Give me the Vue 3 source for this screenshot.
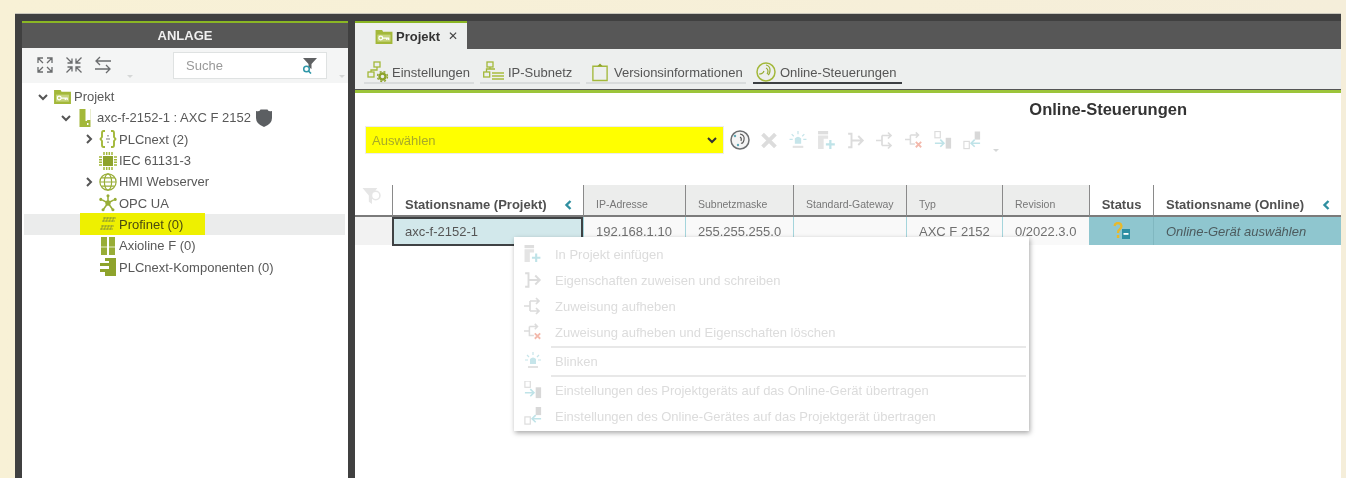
<script setup>
const tree = [
  { label: 'Projekt', icon: 'folder', lvl: 0, chev: 'down' },
  { label: 'axc-f-2152-1 : AXC F 2152', icon: 'device', lvl: 1, chev: 'down', shield: true },
  { label: 'PLCnext (2)', icon: 'braces', lvl: 2, chev: 'right' },
  { label: 'IEC 61131-3', icon: 'chip', lvl: 2 },
  { label: 'HMI Webserver', icon: 'globe', lvl: 2, chev: 'right' },
  { label: 'OPC UA', icon: 'star', lvl: 2 },
  { label: 'Profinet (0)', icon: 'profinet', lvl: 2, selected: true },
  { label: 'Axioline F (0)', icon: 'axio', lvl: 2 },
  { label: 'PLCnext-Komponenten (0)', icon: 'comp', lvl: 2 }
]
const subTabs = [
  { label: 'Einstellungen', icon: 'settings' },
  { label: 'IP-Subnetz', icon: 'subnet' },
  { label: 'Versionsinformationen', icon: 'clip' },
  { label: 'Online-Steuerungen', icon: 'hand', active: true }
]
const tools = ['x', 'beacon', 'docplus', 'assign', 'unassign', 'unassignx', 'toonline', 'toproject']
const heads = [
  { label: '', cls: 'h-filter' },
  { label: 'Stationsname (Projekt)', cls: 'h-main', arrow: true },
  { label: 'IP-Adresse', cls: 'h-sub' },
  { label: 'Subnetzmaske', cls: 'h-sub' },
  { label: 'Standard-Gateway', cls: 'h-sub' },
  { label: 'Typ', cls: 'h-sub' },
  { label: 'Revision', cls: 'h-sub' },
  { label: 'Status', cls: 'h-main h-status' },
  { label: 'Stationsname (Online)', cls: 'h-main', arrow: true }
]
const menu = [
  { label: 'In Projekt einfügen', icon: 'docplus' },
  { label: 'Eigenschaften zuweisen und schreiben', icon: 'assign' },
  { label: 'Zuweisung aufheben', icon: 'unassign' },
  { label: 'Zuweisung aufheben und Eigenschaften löschen', icon: 'unassignx', sep: true },
  { label: 'Blinken', icon: 'beacon', sep: true },
  { label: 'Einstellungen des Projektgeräts auf das Online-Gerät übertragen', icon: 'toonline' },
  { label: 'Einstellungen des Online-Gerätes auf das Projektgerät übertragen', icon: 'toproject' }
]
</script>

<template>
  <div class="page">
    <svg class="defs" aria-hidden="true">
      <symbol id="folder" viewBox="0 0 18 16">
        <path d="M0 1h7l1 2h10v13H0z" fill="#a3b83a" />
        <rect x="2" y="6" width="14" height="7.500" fill="#c6d47c" />
        <circle cx="5.500" cy="9.700" r="2" fill="none" stroke="#fff" stroke-width="1.300" />
        <path d="M7.500 9.700h7M12 9.700v2M14 9.700v2" stroke="#fff" stroke-width="1.300" fill="none" />
      </symbol>
      <symbol id="device" viewBox="0 0 12 18">
        <rect x="0.500" y="0" width="11" height="18" fill="#a3b83a" />
        <rect x="6.500" y="0" width="1.600" height="12" fill="#fff" />
        <rect x="8" y="0" width="3.500" height="11" fill="#fff" />
        <rect x="8" y="14" width="1.500" height="2" fill="#fff" />
      </symbol>
      <symbol id="braces" viewBox="0 0 18 18">
        <path d="M6 1H4.500Q3 1 3 3v4L1.500 9 3 11v4q0 2 1.500 2H6M12 1h1.500Q15 1 15 3v4l1.500 2-1.500 2v4q0 2-1.500 2H12" fill="none" stroke="#a3b83a" stroke-width="1.900" />
        <path d="M9 5v1.500M7 9h4M9 11.500V13" stroke="#777" stroke-width="1.200" fill="none" />
      </symbol>
      <symbol id="chip" viewBox="0 0 18 18">
        <rect x="4" y="4" width="10" height="10" fill="#8ea32c" />
        <path d="M5 0v3M7.700 0v3M10.300 0v3M13 0v3M5 15v3M7.700 15v3M10.300 15v3M13 15v3M0 5h3M0 7.700h3M0 10.300h3M0 13h3M15 5h3M15 7.700h3M15 10.300h3M15 13h3" stroke="#a3b83a" stroke-width="1.500" />
      </symbol>
      <symbol id="globe" viewBox="0 0 20 20">
        <g fill="none" stroke="#98ad36" stroke-width="1.300">
          <circle cx="10" cy="10" r="9" />
          <ellipse cx="10" cy="10" rx="4" ry="9" />
          <path d="M1 10h18M2.500 5.500h15M2.500 14.500h15" />
        </g>
      </symbol>
      <symbol id="star" viewBox="0 0 20 20">
        <path d="M10 10V3M10 10 3.500 6.500M10 10l6.500-3.500M10 10l-5 7M10 10l5 7" stroke="#98ad36" stroke-width="1.700" />
        <circle cx="10" cy="10" r="3" fill="#98ad36" />
        <g fill="#98ad36"><circle cx="10" cy="2" r="1.700" /><circle cx="2" cy="6" r="1.700" /><circle cx="18" cy="6" r="1.700" /><circle cx="4.500" cy="17.500" r="1.700" /><circle cx="15.500" cy="17.500" r="1.700" /></g>
      </symbol>
      <symbol id="profinet" viewBox="0 0 18 14">
        <path d="M4 1h13M3 4h13M2 9h13M1 12h13" stroke="#9aa52a" stroke-width="1.200" />
        <path d="M6 0 4 5M9 0 7 5M12 0l-2 5M15 0l-2 5M4 8l-2 5M7 8l-2 5M10 8l-2 5M13 8l-2 5" stroke="#9aa52a" stroke-width="1" />
      </symbol>
      <symbol id="axio" viewBox="0 0 14 18">
        <rect x="0" y="0" width="6" height="18" fill="#98ad36" />
        <rect x="8" y="0" width="6" height="18" fill="#98ad36" />
        <path d="M0 10h6M8 10h6" stroke="#e8eec8" stroke-width="1" />
      </symbol>
      <symbol id="comp" viewBox="0 0 16 18">
        <path d="M5 0h11v18H5v-4H0v-3h9V8H0V5h9V3H5z" fill="#8ea32c" />
      </symbol>
      <symbol id="shield" viewBox="0 0 16 18">
        <path d="M0 2q4 1 4.500-1.500h7Q12 3 16 2v7q0 6-8 9-8-3-8-9z" fill="#5c5f62" />
      </symbol>
      <symbol id="expand" viewBox="0 0 18 18">
        <g fill="none" stroke="#6a6c6e" stroke-width="1.300"><path d="M7 2H2v5M2 2l5 5M11 2h5v5M16 2l-5 5M7 16H2v-5M2 16l5-5M11 16h5v-5M16 16l-5-5" /></g>
      </symbol>
      <symbol id="collapse" viewBox="0 0 18 18">
        <g fill="none" stroke="#6a6c6e" stroke-width="1.300"><path d="M2.500 7H7V2.500M7 7 1.500 1.500M15.500 7H11V2.500M11 7l5.500-5.500M2.500 11H7v4.500M7 11l-5.500 5.500M15.500 11H11v4.500M11 11l5.500 5.500" /></g>
      </symbol>
      <symbol id="swap" viewBox="0 0 18 18">
        <path d="M17 5H3M6 1 2 5l4 4M1 13h14M12 9l4 4-4 4" fill="none" stroke="#6a6c6e" stroke-width="1.300" />
      </symbol>
      <symbol id="search" viewBox="0 0 16 16">
        <path d="M1 0h14L9.500 6v5l-3-2V6z" fill="#5f6163" />
        <circle cx="4.500" cy="11" r="2.800" fill="#fff" stroke="#2f97a8" stroke-width="1.500" />
        <path d="m6.500 13 2.500 2.500" stroke="#2f97a8" stroke-width="1.600" />
      </symbol>
      <symbol id="settings" viewBox="0 0 22 22">
        <g fill="none" stroke="#a3b83a" stroke-width="1.300"><rect x="7" y="1" width="6" height="5" /><rect x="1" y="11" width="6" height="5" /><path d="M10 6v3H4v2" /></g>
        <circle cx="15.500" cy="15.500" r="3" fill="none" stroke="#8ea32c" stroke-width="2.400" />
        <circle cx="15.500" cy="15.500" r="5" fill="none" stroke="#8ea32c" stroke-width="1.400" stroke-dasharray="2 2" />
      </symbol>
      <symbol id="subnet" viewBox="0 0 22 22">
        <g fill="none" stroke="#a3b83a" stroke-width="1.300"><rect x="4" y="1" width="6" height="5" /><rect x="0.700" y="11" width="6" height="5" /><path d="M7 6v2H3.500v3M7 8h5" /></g>
        <path d="M9 12h12M9 15h12M9 18h12" stroke="#b9c96a" stroke-width="1.800" />
      </symbol>
      <symbol id="clip" viewBox="0 0 18 20">
        <path d="M1 3h16v16H1z" fill="none" stroke="#a3b83a" stroke-width="1.500" />
        <path d="M6 3l3-3 3 3z" fill="#8ea32c" />
      </symbol>
      <symbol id="hand" viewBox="0 0 20 20">
        <circle cx="10" cy="10" r="9" fill="none" stroke="#a3b83a" stroke-width="1.500" />
        <path d="M3 12q4 0 5-3M10 3q4 1 4 5 0 4-2 5M10 6q2 1 2 3 0 2-1 3" fill="none" stroke="#98ad36" stroke-width="1.200" />
      </symbol>
      <symbol id="disc" viewBox="0 0 20 20">
        <circle cx="10" cy="10" r="9" fill="#f4f4f4" stroke="#6d6f71" stroke-width="1.500" />
        <circle cx="5" cy="6" r="1.200" fill="#5fa8b8" /><circle cx="8" cy="15" r="1.200" fill="#5fa8b8" />
        <path d="M10 4q5 1 4 6-1 4-3 3M10 7q2 1 1 4" fill="none" stroke="#555" stroke-width="1.100" />
      </symbol>
      <symbol id="x" viewBox="0 0 14 14">
        <path d="m2 2 10 10M12 2 2 12" stroke="#dcdcdc" stroke-width="3" />
      </symbol>
      <symbol id="beacon" viewBox="0 0 16 18">
        <path d="M5 12V7q3-3 6 0v5z" fill="#c6e5ea" />
        <path d="M8 0v3M2 3l2 2M14 3l-2 2M0 8h3M13 8h3" stroke="#c6e5ea" stroke-width="1.200" />
        <rect x="3" y="14" width="10" height="2" fill="#e2e2e2" />
      </symbol>
      <symbol id="docplus" viewBox="0 0 16 17">
        <rect x="0" y="0" width="9" height="3" fill="#dedede" />
        <path d="M0 4h9v3H5v9H0z" fill="#e4e4e4" />
        <path d="M11 8v8M7 12h8" stroke="#bfe3e8" stroke-width="2" />
      </symbol>
      <symbol id="assign" viewBox="0 0 16 14">
        <path d="M1 1h3v12H1M4 7h10M10 3l4 4-4 4" fill="none" stroke="#dcdcdc" stroke-width="1.700" />
      </symbol>
      <symbol id="unassign" viewBox="0 0 18 16">
        <path d="M0 8h6M6 3v10M6 3h9M6 13h9M12 0l3 3-3 3M12 10l3 3-3 3" fill="none" stroke="#dcdcdc" stroke-width="1.700" />
      </symbol>
      <symbol id="unassignx" viewBox="0 0 20 18">
        <path d="M0 8h6M6 3v10h5M6 3h9M12 0l3 3-3 3" fill="none" stroke="#dcdcdc" stroke-width="1.700" />
        <path d="m12 10.500 6 6M18 10.500l-6 6" stroke="#f3b9ac" stroke-width="2" />
      </symbol>
      <symbol id="toonline" viewBox="0 0 20 20">
        <rect x="1" y="0" width="6" height="7" fill="#fff" stroke="#dcdcdc" stroke-width="1.300" />
        <path d="M1 13h10M7 9l4 4-4 4" fill="none" stroke="#bfe3e8" stroke-width="1.800" />
        <rect x="13" y="7" width="6" height="12" fill="#d8d8d8" />
      </symbol>
      <symbol id="toproject" viewBox="0 0 20 20">
        <rect x="1" y="11" width="6" height="8" fill="#fff" stroke="#dcdcdc" stroke-width="1.300" />
        <path d="M19 13H9M13 9l-4 4 4 4" fill="none" stroke="#bfe3e8" stroke-width="1.800" />
        <rect x="13" y="0" width="6" height="9" fill="#d8d8d8" />
      </symbol>
      <symbol id="filter" viewBox="0 0 20 18">
        <path d="M1 1h14l-5 7v8l-3-2V8z" fill="#e6e6e6" />
        <circle cx="13.500" cy="8" r="4" fill="#fff" stroke="#e6e6e6" stroke-width="1.500" />
      </symbol>
      <symbol id="status" viewBox="0 0 17 18">
        <path d="M1.500 4Q2 1 5 1t3.500 3Q8.500 6 6.500 7.500 5 8.500 5 11" fill="none" stroke="#e8b92b" stroke-width="2.300" />
        <rect x="3.800" y="13" width="2.500" height="3" fill="#e8b92b" />
        <rect x="9" y="7" width="8" height="10" fill="#2e8ea3" />
        <rect x="10.500" y="11" width="5" height="1.800" fill="#fff" />
      </symbol>
      <symbol id="back" viewBox="0 0 8 10">
        <path d="M6.500 1 2.500 5l4 4" fill="none" stroke="#2f8fa0" stroke-width="2.400" />
      </symbol>
    </svg>

    <div class="window">
      <aside class="left">
        <div class="panel-title">ANLAGE</div>
        <div class="left-tools">
          <svg class="lt-icon"><use href="#expand" /></svg>
          <svg class="lt-icon"><use href="#collapse" /></svg>
          <svg class="lt-icon"><use href="#swap" /></svg>
          <span class="caret caret-a"></span>
          <div class="searchbox">
            <span>Suche</span>
            <svg class="search-icon"><use href="#search" /></svg>
          </div>
          <span class="caret"></span>
        </div>
        <ul class="tree">
          <li v-for="n in tree" :key="n.label" class="node" :class="['lvl' + n.lvl, { selected: n.selected }]">
            <span class="chev-slot">
              <svg v-if="n.chev" class="chev" :class="n.chev" viewBox="0 0 10 10"><path d="M1 3l4 4 4-4" fill="none" stroke="#555" stroke-width="2" /></svg>
            </span>
            <span class="label-wrap">
              <svg class="node-icon" :class="'ni-' + n.icon"><use :href="'#' + n.icon" /></svg>
              <span class="node-label">{{ n.label }}</span>
            </span>
            <svg v-if="n.shield" class="shield"><use href="#shield" /></svg>
          </li>
        </ul>
      </aside>

      <main class="right">
        <div class="tabstrip">
          <div class="tab">
            <svg class="tab-icon"><use href="#folder" /></svg>
            <span>Projekt</span>
            <span class="tab-x">✕</span>
          </div>
        </div>
        <nav class="subtabs">
          <div v-for="t in subTabs" :key="t.label" class="subtab" :class="{ active: t.active }">
            <svg class="st-icon"><use :href="'#' + t.icon" /></svg>
            <span>{{ t.label }}</span>
          </div>
        </nav>
        <div class="content">
          <h2 class="title">Online-Steuerungen</h2>
          <div class="toolbar">
            <div class="select">
              <span>Auswählen</span>
              <svg class="sel-chev" viewBox="0 0 10 10"><path d="M1 3l4 4 4-4" fill="none" stroke="#333" stroke-width="2" /></svg>
            </div>
            <svg class="tool-disc"><use href="#disc" /></svg>
            <div class="tools">
              <span v-for="t in tools" :key="t" class="tool-slot"><svg class="tool"><use :href="'#' + t" /></svg></span>
            </div>
            <span class="caret caret-tools"></span>
          </div>

          <div class="grid">
            <div v-for="h in heads" :key="h.cls + h.label" class="hd" :class="h.cls">
              <svg v-if="h.cls === 'h-filter'" class="filter-icon"><use href="#filter" /></svg>
              <span>{{ h.label }}</span>
              <svg v-if="h.arrow" class="back"><use href="#back" /></svg>
            </div>
            <div class="cd c-blank"></div>
            <div class="cd c-name">axc-f-2152-1</div>
            <div class="cd c-val">192.168.1.10</div>
            <div class="cd c-val">255.255.255.0</div>
            <div class="cd c-val"></div>
            <div class="cd c-val">AXC F 2152</div>
            <div class="cd c-val">0/2022.3.0</div>
            <div class="cd c-status"><svg class="status-icon"><use href="#status" /></svg></div>
            <div class="cd c-online">Online-Gerät auswählen</div>
          </div>

          <ul class="menu">
            <template v-for="m in menu" :key="m.label">
              <li class="menu-item">
                <svg class="menu-icon"><use :href="'#' + m.icon" /></svg>
                <span>{{ m.label }}</span>
              </li>
              <li v-if="m.sep" class="menu-sep"></li>
            </template>
          </ul>
        </div>
      </main>
    </div>
  </div>
</template>

<style>
html, body { margin: 0; background: #f6efd9; overflow: hidden; }
</style>

<style scoped>
.page {
  width: 1346px;
  height: 478px;
  box-sizing: border-box;
  padding: 14px 5px 0 15px;
  overflow: hidden;
  font-family: "Liberation Sans", Arial, sans-serif;
  font-size: 13px;
  color: #555;
  filter: blur(0.55px);
  background: linear-gradient(90deg, #f8f1d6 0, #f5eeda 100%);
}
.defs { position: absolute; width: 0; height: 0; overflow: hidden; }
ul { list-style: none; margin: 0; padding: 0; }
.window {
  height: 464px;
  display: flex;
  gap: 7px;
  padding: 7px 0 0 7px;
  box-sizing: border-box;
  background: #404040;
  box-shadow: 0 -1px 0 #c9c7bc;
}
.left {
  width: 326px;
  flex: none;
  background: #fff;
  display: flex;
  flex-direction: column;
}
.panel-title {
  height: 25px;
  border-top: 2px solid #8ab624;
  background: #575757;
  color: #f0f0f0;
  font-weight: bold;
  font-size: 13px;
  line-height: 25px;
  text-align: center;
}
.left-tools {
  height: 35px;
  background: #f4f5f5;
  display: flex;
  align-items: center;
  padding-left: 14px;
}
.lt-icon { width: 18px; height: 18px; margin-right: 11px; margin-top: -1px; }
.caret {
  display: block;
  width: 0;
  height: 0;
  border-left: 3px solid transparent;
  border-right: 3px solid transparent;
  border-top: 3px solid #d5d7d7;
}
.caret-a { margin: 22px 0 0 4px; }
.searchbox {
  width: 154px;
  height: 27px;
  margin-left: 40px;
  margin-right: 12px;
  box-sizing: border-box;
  border: 1px solid #dfe2e2;
  background: #fff;
  display: flex;
  align-items: center;
  justify-content: space-between;
  padding: 0 8px 0 12px;
  color: #999;
}
.searchbox + .caret { margin-top: 22px; }
.search-icon { width: 16px; height: 16px; }
.tree { padding-top: 3px; }
.node {
  height: 21.3px;
  margin: 0 3px 0 2px;
  display: flex;
  align-items: center;
  color: #585858;
}
.node.selected { background: #ebecec; }
.chev-slot { width: 10px; height: 10px; flex: none; display: block; }
.chev { width: 10px; height: 10px; display: block; }
.chev.right { transform: rotate(-90deg); }
.lvl0 { padding-left: 14px; }
.lvl1 { padding-left: 37px; }
.lvl2 { padding-left: 60px; }
.label-wrap { display: flex; align-items: center; }
.lvl0 .label-wrap { margin-left: 6px; }
.lvl1 .label-wrap { margin-left: 8px; }
.lvl2 .label-wrap { margin-left: 5px; }
.selected .label-wrap {
  background: #eef000;
  height: 22px;
  margin-left: -14px;
  padding: 0 22px 0 19px;
  color: #4a4a10;
}
.node-icon { width: 18px; height: 18px; margin-right: 2px; flex: none; }
.ni-folder { width: 17px; height: 15px; margin-right: 3px; }
.ni-device { width: 12px; height: 18px; margin-right: 6px; }
.ni-profinet { width: 18px; height: 14px; }
.ni-axio { width: 14px; height: 18px; margin: 0 4px 0 2px; }
.ni-comp { width: 16px; height: 18px; margin: 0 3px 0 1px; }
.shield { width: 16px; height: 18px; margin-left: 5px; }

.right {
  flex: 1;
  min-width: 0;
  background: #fff;
  display: flex;
  flex-direction: column;
}
.tabstrip { height: 28px; background: #575757; flex: none; display: flex; }
.tab {
  width: 112px;
  box-sizing: border-box;
  border-top: 2px solid #8ab624;
  background: #edefee;
  display: flex;
  align-items: center;
  padding-left: 20px;
  color: #333;
  font-weight: bold;
}
.tab-icon { width: 18px; height: 15px; margin-right: 3px; }
.tab-x { margin-left: 8px; font-size: 12px; color: #444; font-weight: normal; }
.subtabs {
  height: 41px;
  flex: none;
  box-sizing: border-box;
  background: #edefee;
  display: flex;
  padding: 9px 0 0 9px;
  gap: 6px;
  border-bottom: 1px solid #555;
}
.subtab {
  height: 26px;
  box-sizing: border-box;
  display: flex;
  align-items: center;
  border-bottom: 2px solid #d9dcdc;
  padding: 4px 3px 0 3px;
  color: #555;
  white-space: nowrap;
}
.subtab.active { border-bottom-color: #3c3f42; margin-left: 1px; }
.subtab:nth-child(1) { width: 110px; }
.subtab:nth-child(2) { width: 100px; }
.subtab:nth-child(3) { width: 160px; }
.subtab:nth-child(4) { width: 149px; }
.st-icon { width: 22px; height: 22px; margin-right: 3px; flex: none; }
.subtab:nth-child(3) .st-icon { width: 16px; height: 19px; margin: 0 6px 0 3px; }
.subtab:nth-child(4) .st-icon { width: 20px; height: 20px; margin-right: 4px; }
.content {
  flex: 1;
  border-top: 3px solid #9cc43a;
  position: relative;
}
.title {
  margin: 0;
  padding: 7px 154px 0 0;
  text-align: right;
  font-size: 16.5px;
  line-height: 18px;
  font-weight: bold;
  color: #333;
}
.toolbar {
  display: flex;
  align-items: center;
  margin: 9px 0 0 11px;
  height: 26px;
}
.select {
  width: 357px;
  height: 26px;
  flex: none;
  box-sizing: border-box;
  background: #ffff00;
  display: flex;
  align-items: center;
  justify-content: space-between;
  padding: 0 6px 0 6px;
  color: #a8aa28;
  box-shadow: 0 0 0 1px #ececec;
}
.sel-chev { width: 10px; height: 10px; }
.tool-disc { width: 20px; height: 20px; margin-left: 7px; flex: none; }
.tools { display: flex; margin-left: 4px; align-items: center; }
.tool-slot { width: 29px; display: flex; justify-content: center; }
.tool { width: 18px; height: 19px; }
.caret-tools { margin: 20px 0 0 7px; }

.grid {
  display: grid;
  grid-template-columns: 37px 191px 102px 108px 113px 96px 87px 64px 188px;
  grid-template-rows: 32px 29px;
  margin: 32px 0 0 0;
}
.hd {
  display: flex;
  align-items: center;
  box-sizing: border-box;
  border-left: 1px solid #8a8a8a;
  border-bottom: 2px solid #7b7b7b;
  padding: 8px 0 0 12px;
  white-space: nowrap;
}
.h-filter { border-left: none; padding: 0 0 8px 6px; }
.filter-icon { width: 22px; height: 19px; }
.h-main { font-weight: bold; color: #505050; background: #fff; justify-content: space-between; padding-right: 11px; }
.h-status { justify-content: center; padding: 8px 0 0; }
.h-sub { background: #ecedec; font-size: 10.500px; color: #777; }
.back { width: 8px; height: 10px; margin-top: 1px; }
.cd {
  display: flex;
  align-items: center;
  box-sizing: border-box;
  padding: 0 12px;
  white-space: nowrap;
  background: #f9f9f9;
  border-left: 1px solid #a5d5dc;
  margin-bottom: 1px;
}
.c-blank { background: #f2f2f2; border-left: none; }
.c-name { background: #d2e8eb; border: 2px solid #3f4244; padding: 0 11px; margin-bottom: 0; }
.c-val { color: #707070; }
.c-status { background: #8fc6cf; border-left: none; justify-content: center; padding: 0; }
.c-online { background: #8fc6cf; border-left: 1px solid #80b7c0; font-style: italic; color: #4c5b5e; }
.status-icon { width: 17px; height: 18px; }
.menu {
  position: absolute;
  left: 159px;
  top: 144px;
  width: 515px;
  height: 194px;
  box-sizing: border-box;
  padding-top: 4px;
  background: #fff;
  box-shadow: 1px 2px 5px rgba(0, 0, 0, .35);
  color: #dcdcdc;
}
.menu-item {
  height: 26px;
  display: flex;
  align-items: center;
  padding-left: 10px;
}
.menu-icon { width: 18px; height: 18px; margin-right: 13px; flex: none; }
.menu-sep { height: 2px; margin: 1px 3px 0 37px; background: #e8e8e8; }
</style>
